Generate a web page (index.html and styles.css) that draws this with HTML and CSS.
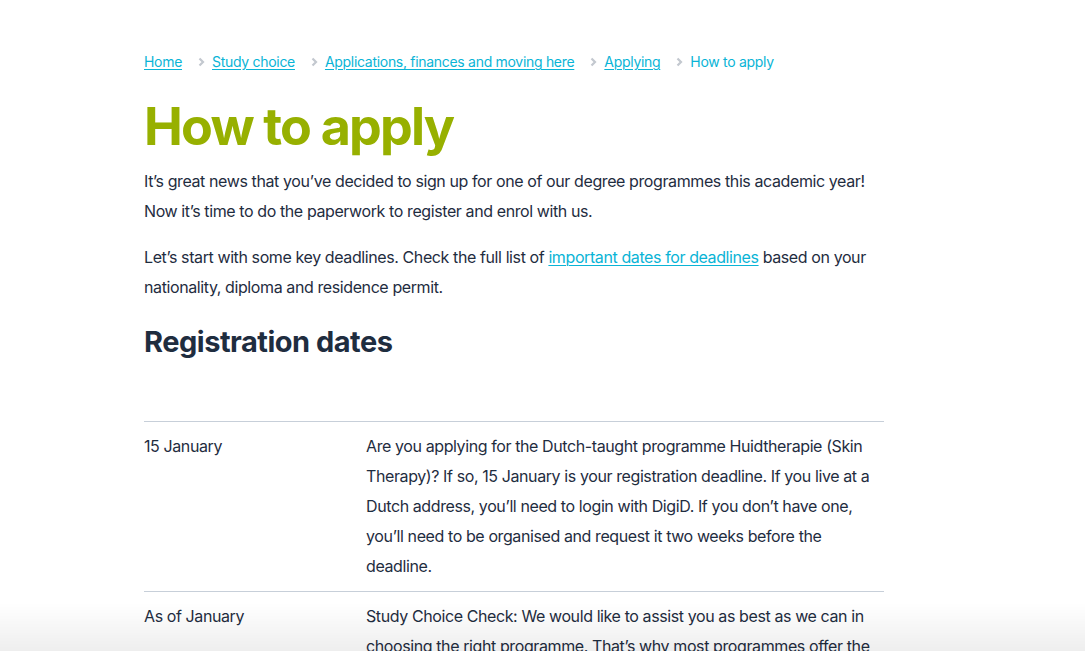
FILE: index.html
```html
<!DOCTYPE html>
<html lang="en">
<head>
<meta charset="utf-8">
<title>How to apply</title>
<link rel="stylesheet" href="styles.css">
</head>
<body>
<main class="page">
  <nav class="crumbs">
    <a href="#" class="crumb">Home</a>
    <span class="sep"><svg width="7" height="10" viewBox="0 0 7 10"><path d="M1.5 1.5 L5 5 L1.5 8.5" fill="none" stroke="#c3c8cf" stroke-width="2.2"/></svg></span>
    <a href="#" class="crumb">Study choice</a>
    <span class="sep"><svg width="7" height="10" viewBox="0 0 7 10"><path d="M1.5 1.5 L5 5 L1.5 8.5" fill="none" stroke="#c3c8cf" stroke-width="2.2"/></svg></span>
    <a href="#" class="crumb">Applications, finances and moving here</a>
    <span class="sep"><svg width="7" height="10" viewBox="0 0 7 10"><path d="M1.5 1.5 L5 5 L1.5 8.5" fill="none" stroke="#c3c8cf" stroke-width="2.2"/></svg></span>
    <a href="#" class="crumb">Applying</a>
    <span class="sep"><svg width="7" height="10" viewBox="0 0 7 10"><path d="M1.5 1.5 L5 5 L1.5 8.5" fill="none" stroke="#c3c8cf" stroke-width="2.2"/></svg></span>
    <span class="crumb current">How to apply</span>
  </nav>

  <h1 class="title">How to apply</h1>

  <p class="text">It’s great news that you’ve decided to sign up for one of our degree programmes this academic year! Now it’s time to do the paperwork to register and enrol with us.</p>
  <p class="text">Let’s start with some key deadlines. Check the full list of <a href="#" class="link">important dates for deadlines</a> based on your nationality, diploma and residence permit.</p>

  <h2 class="subtitle">Registration dates</h2>

  <div class="dates">
    <div class="row">
      <div class="when">15 January</div>
      <div class="what">Are you applying for the Dutch-taught programme Huidtherapie (Skin Therapy)? If so, 15 January is your registration deadline. If you live at a Dutch address, you’ll need to login with DigiD. If you don’t have one, you’ll need to be organised and request it two weeks before the deadline.</div>
    </div>
    <div class="row">
      <div class="when">As of January</div>
      <div class="what">Study Choice Check: We would like to assist you as best as we can in choosing the right programme. That’s why most programmes offer the Study Choice Check.</div>
    </div>
  </div>
</main>
<div class="fade"></div>
</body>
</html>
```

FILE: styles.css
```css
html, body {
  margin: 0;
  padding: 0;
  background: #ffffff;
  overflow: hidden;
}
body {
  font-family: "Inter", "Liberation Sans", sans-serif;
  color: #1f2d3f;
}
.page {
  width: 740px;
  margin-left: 144px;
  padding-top: 52px;
}
.crumbs {
  display: flex;
  align-items: center;
  font-size: 14px;
  line-height: 20px;
  letter-spacing: -0.3px;
}
.crumb {
  color: #0ab4d6;
  text-decoration: underline;
  text-decoration-thickness: 1px;
  text-underline-offset: 2px;
}
.crumb.current {
  text-decoration: none;
}
.sep {
  display: flex;
  align-items: center;
  margin: 0 7px 0 16px;
}
.title {
  margin: 20px 0 4px;
  font-size: 52px;
  line-height: 70px;
  font-weight: 700;
  color: #97b000;
  letter-spacing: -1.8px;
}
.text {
  margin: 0 0 16px;
  font-size: 16px;
  line-height: 30px;
  letter-spacing: -0.4px;
}
.link {
  color: #0ab4d6;
  text-decoration: underline;
  text-decoration-thickness: 1px;
  text-underline-offset: 2px;
}
.subtitle {
  margin: 20px 0 0;
  font-size: 29px;
  line-height: 40px;
  font-weight: 700;
  color: #1f2d3f;
  letter-spacing: -0.5px;
}
.dates {
  margin-top: 59px;
  border-top: 1px solid #c7cfd9;
}
.row {
  display: grid;
  grid-template-columns: 222px 1fr;
  padding: 9px 0 10px;
  border-bottom: 1px solid #c7cfd9;
  font-size: 16px;
  line-height: 30px;
  letter-spacing: -0.4px;
}
.fade {
  position: fixed;
  left: 0;
  right: 0;
  bottom: 0;
  height: 48px;
  background: linear-gradient(to bottom, rgba(0,0,0,0), rgba(0,0,0,0.065));
  pointer-events: none;
}
```
